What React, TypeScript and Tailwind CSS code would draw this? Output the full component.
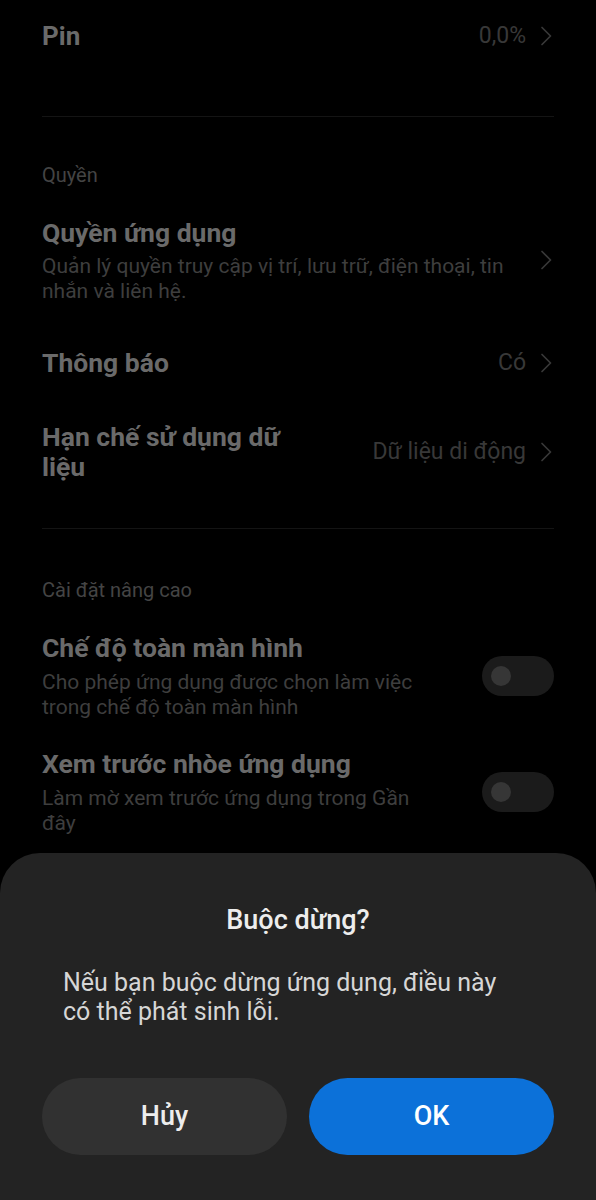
const font = { fontFamily: "Roboto, 'Noto Sans', sans-serif" };

function Chevron() {
  return (
    <svg width="12" height="20" viewBox="0 0 12 20" fill="none" className="shrink-0">
      <polyline points="2,1.5 10.5,10 2,18.5" stroke="#383838" strokeWidth="1.7" strokeLinecap="round" strokeLinejoin="round" />
    </svg>
  );
}

function Toggle() {
  return (
    <div className="flex h-[40px] w-[72px] shrink-0 items-center rounded-full bg-[#1b1b1b] pl-[9px]">
      <div className="h-[20px] w-[20px] rounded-full bg-[#363636]" />
    </div>
  );
}

function Divider() {
  return <div className="mx-[42px] h-px bg-[#141414]" />;
}

function Value({ children }: { children: string }) {
  return (
    <span className="flex shrink-0 items-center gap-[14px] text-[23px] text-[#383838]">
      {children}
      <Chevron />
    </span>
  );
}

export default function App() {
  return (
    <div className="relative h-[1200px] w-[596px] overflow-hidden bg-black" style={font}>
      {/* settings list (dimmed by dialog overlay) */}
      <div className="flex flex-col">
        <div className="flex h-[72px] items-center justify-between pl-[42px] pr-[44px]">
          <span className="text-[26px] font-bold text-[#6a6a6a]">Pin</span>
          <Value>0,0%</Value>
        </div>
        <div className="h-[44px]" />
        <Divider />

        {/* Quyền */}
        <div className="px-[42px] pt-[46px] text-[20px] leading-[24px] text-[#444]">Quyền</div>

        <div className="mt-[29px] flex items-center justify-between pl-[42px] pr-[44px]">
          <div className="w-[480px]">
            <div className="text-[26.5px] leading-[34px] font-bold text-[#6a6a6a]">Quyền ứng dụng</div>
            <div className="mt-[4px] text-[21px] leading-[25px] text-[#3e3e3e]">
              Quản lý quyền truy cập vị trí, lưu trữ, điện thoại, tin nhắn và liên hệ.
            </div>
          </div>
          <Chevron />
        </div>

        <div className="mt-[24px] flex h-[70px] items-center justify-between pl-[42px] pr-[44px]">
          <span className="text-[26.5px] font-bold text-[#6a6a6a]">Thông báo</span>
          <Value>Có</Value>
        </div>

        <div className="mt-[24px] flex items-center justify-between pl-[42px] pr-[44px]">
          <div className="w-[270px] text-[26.5px] leading-[30px] font-bold text-[#6a6a6a]">
            Hạn chế sử dụng dữ liệu
          </div>
          <Value>Dữ liệu di động</Value>
        </div>

        <div className="h-[46px]" />
        <Divider />

        {/* Cài đặt nâng cao */}
        <div className="px-[42px] pt-[49px] text-[20px] leading-[24px] text-[#444]">Cài đặt nâng cao</div>

        <div className="mt-[29px] flex items-center justify-between px-[42px]">
          <div className="w-[395px]">
            <div className="whitespace-nowrap text-[26.5px] leading-[34px] font-bold text-[#6a6a6a]">Chế độ toàn màn hình</div>
            <div className="mt-[5px] text-[21px] leading-[25px] text-[#3e3e3e]">
              Cho phép ứng dụng được chọn làm việc trong chế độ toàn màn hình
            </div>
          </div>
          <Toggle />
        </div>

        <div className="mt-[27px] flex items-center justify-between px-[42px]">
          <div className="w-[395px]">
            <div className="whitespace-nowrap text-[26.5px] leading-[34px] font-bold text-[#6a6a6a]">Xem trước nhòe ứng dụng</div>
            <div className="mt-[5px] text-[21px] leading-[25px] text-[#3e3e3e]">
              Làm mờ xem trước ứng dụng trong Gần đây
            </div>
          </div>
          <Toggle />
        </div>
      </div>

      {/* bottom sheet dialog */}
      <div className="absolute inset-x-0 top-[853px] bottom-0 flex flex-col rounded-t-[40px] bg-[#232323] px-[42px]">
        <div className="pt-[50px] text-center text-[27px] leading-[34px] font-medium text-[#ededed]">Buộc dừng?</div>
        <div className="pl-[21px] pr-[30px] pt-[31px] text-[25px] leading-[29px] text-[#d6d6d6]">
          Nếu bạn buộc dừng ứng dụng, điều này có thể phát sinh lỗi.
        </div>
        <div className="mt-[52px] flex gap-[22px]">
          <button className="flex h-[77px] flex-1 items-center justify-center rounded-full bg-[#313131] text-[27px] font-medium text-[#ededed]">
            Hủy
          </button>
          <button className="flex h-[77px] flex-1 items-center justify-center rounded-full bg-[#0c71d9] text-[27px] font-medium text-white">
            OK
          </button>
        </div>
      </div>
    </div>
  );
}
